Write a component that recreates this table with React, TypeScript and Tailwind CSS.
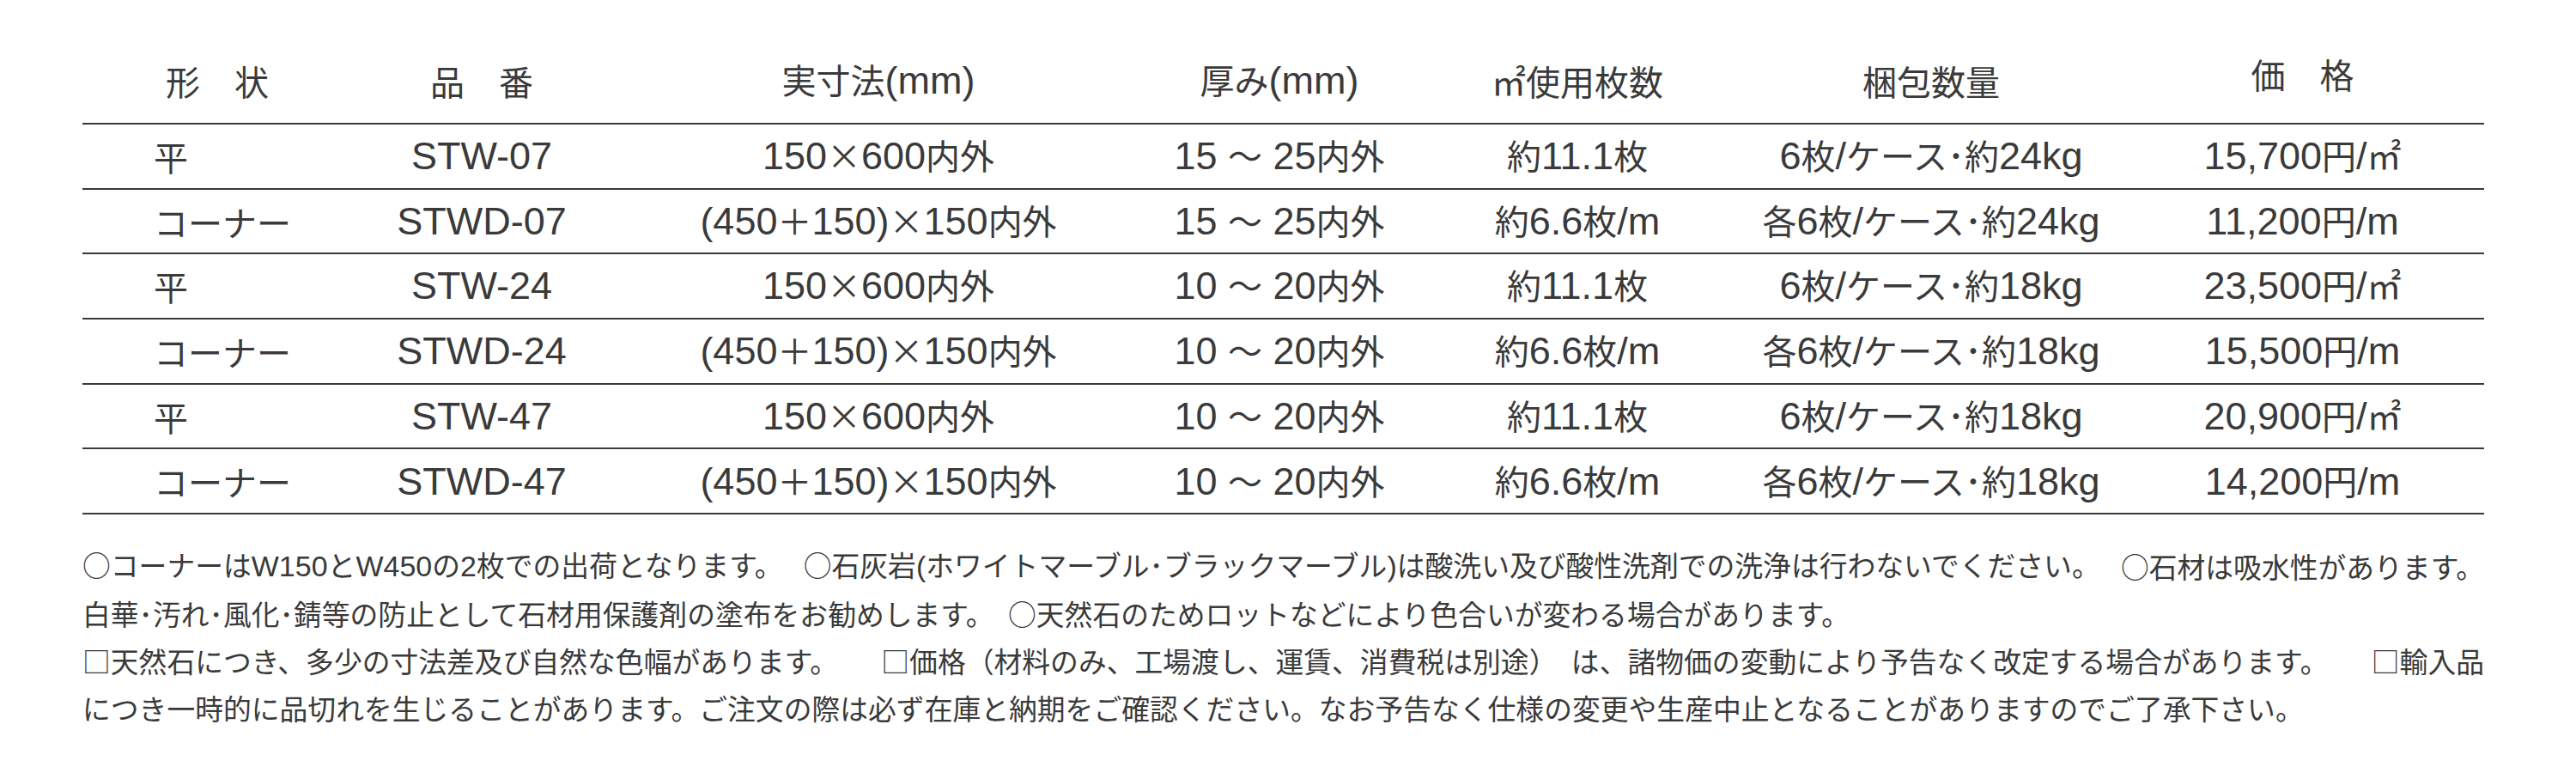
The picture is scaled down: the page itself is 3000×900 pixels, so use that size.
const latinT = "font-['Liberation_Sans',sans-serif] text-[45px]";
const cjkT = "font-['Noto_Sans_CJK_JP',sans-serif] text-[40px]";
const latinN = "font-['Liberation_Sans',sans-serif] text-[34px]";
const cjkN = "font-['Noto_Sans_CJK_JP',sans-serif] text-[32.8px]";

// ascii runs get the latin face, everything else the japanese one
const Mixed = ({ text, latin, cjk }: { text: string; latin: string; cjk: string }) => {
  const parts = text.match(/[\x20-\x7e]+|[^\x20-\x7e]+/g) ?? [];
  return (
    <span className="whitespace-pre">
      {parts.map((p, i) => (
        <span key={i} className={/^[\x20-\x7e]/.test(p) ? latin : cjk}>
          {p}
        </span>
      ))}
    </span>
  );
};

const cols = "grid grid-cols-[314px_302px_622px_312px_382px_442px_423px]";

const headers = ["形　状", "品　番", "実寸法(mm)", "厚み(mm)", "㎡使用枚数", "梱包数量", "価　格"];

const rows = [
  ["平", "STW-07", "150×600内外", "15 ～ 25内外", "約11.1枚", "6枚/ケース･約24kg", "15,700円/㎡"],
  ["コーナー", "STWD-07", "(450＋150)×150内外", "15 ～ 25内外", "約6.6枚/m", "各6枚/ケース･約24kg", "11,200円/m"],
  ["平", "STW-24", "150×600内外", "10 ～ 20内外", "約11.1枚", "6枚/ケース･約18kg", "23,500円/㎡"],
  ["コーナー", "STWD-24", "(450＋150)×150内外", "10 ～ 20内外", "約6.6枚/m", "各6枚/ケース･約18kg", "15,500円/m"],
  ["平", "STW-47", "150×600内外", "10 ～ 20内外", "約11.1枚", "6枚/ケース･約18kg", "20,900円/㎡"],
  ["コーナー", "STWD-47", "(450＋150)×150内外", "10 ～ 20内外", "約6.6枚/m", "各6枚/ケース･約18kg", "14,200円/m"],
];

const notes: string[][] = [
  [
    "○コーナーはW150とW450の2枚での出荷となります。",
    "○石灰岩(ホワイトマーブル･ブラックマーブル)は酸洗い及び酸性洗剤での洗浄は行わないでください。",
    "○石材は吸水性があります。",
  ],
  ["白華･汚れ･風化･錆等の防止として石材用保護剤の塗布をお勧めします。　○天然石のためロットなどにより色合いが変わる場合があります。"],
  [
    "□天然石につき、多少の寸法差及び自然な色幅があります。",
    "□価格（材料のみ、工場渡し、運賃、消費税は別途）　は、諸物価の変動により予告なく改定する場合があります。",
    "□輸入品",
  ],
  ["につき一時的に品切れを生じることがあります。ご注文の際は必ず在庫と納期をご確認ください。なお予告なく仕様の変更や生産中止となることがありますのでご了承下さい。"],
];

export default function App() {
  return (
    <div className="w-[3000px] h-[900px] bg-white text-[#3a3a3a]">
      <div className="ml-[96px] w-[2797px]">
        <div className={`${cols} h-[145px] pt-[45px] border-b-2 border-[#3a3a3a]`}>
          {headers.map((h, i) => (
            <div key={i} className={`flex items-center justify-center ${i === 6 ? "pb-[16px]" : ""}`}>
              <Mixed text={h} latin={latinT} cjk={cjkT} />
            </div>
          ))}
        </div>

        {rows.map((r, ri) => (
          <div key={ri} className={`${cols} h-[75.7px] border-b-2 border-[#3a3a3a]`}>
            {r.map((c, ci) => (
              <div
                key={ci}
                className={`flex items-center ${ci === 0 ? "justify-start pl-[83px]" : "justify-center"}`}
              >
                <Mixed text={c} latin={latinT} cjk={cjkT} />
              </div>
            ))}
          </div>
        ))}
      </div>

      <div className="ml-[96px] w-[2797px] mt-[32px]">
        {notes.map((line, li) => (
          <div key={li} className="h-[55px] flex items-center justify-between whitespace-nowrap">
            {line.map((seg, si) => (
              <Mixed key={si} text={seg} latin={latinN} cjk={cjkN} />
            ))}
          </div>
        ))}
      </div>
    </div>
  );
}
